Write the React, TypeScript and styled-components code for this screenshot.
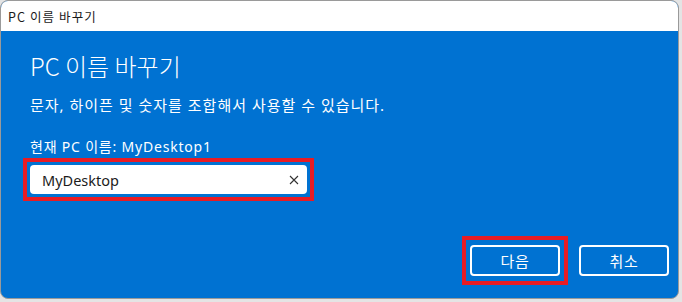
import React from "react";
import styled, { createGlobalStyle } from "styled-components";

const Global = createGlobalStyle`
  html, body { margin: 0; padding: 0; }
  body {
    background: #e4e4e4;
    font-family: "Noto Sans", "Noto Sans CJK KR", sans-serif;
    width: 682px;
    height: 302px;
    overflow: hidden;
  }
`;

const BLUE = "#0072d2";
const RED = "#e81c24";

const Window = styled.div`
  box-sizing: border-box;
  width: 679px;
  height: 299px;
  border: 1px solid #9a9a9a;
  border-radius: 8px;
  overflow: hidden;
  display: flex;
  flex-direction: column;
  background: ${BLUE};
`;

const TitleBar = styled.div`
  height: 30px;
  flex: none;
  background: #ffffff;
  display: flex;
  align-items: center;
  padding-left: 7px;
  font-size: 12.5px;
  letter-spacing: 1.1px;
  color: #1a1a1a;
  font-family: "Noto Sans CJK KR", sans-serif;
`;

const Body = styled.div`
  flex: 1;
  display: flex;
  flex-direction: column;
  padding: 19px 9px 13px 29px;
  color: #ffffff;
  font-family: "Noto Sans", "Noto Sans CJK KR", sans-serif;
`;

const Heading = styled.h1`
  margin: 0;
  font-size: 24px;
  line-height: 32px;
  font-weight: 300;
  font-family: "Noto Sans CJK KR", sans-serif;
`;

const Text = styled.p<{ $top: number; $size: number; $spacing: number }>`
  margin: ${(p) => p.$top}px 0 0 0;
  font-size: ${(p) => p.$size}px;
  letter-spacing: ${(p) => p.$spacing}px;
  line-height: 20px;
  font-weight: 400;
`;

const Highlight = styled.div<{ $pad: string }>`
  box-sizing: border-box;
  border: 4px solid ${RED};
  padding: ${(p) => p.$pad};
  display: inline-flex;
`;

const FieldWrap = styled.div`
  margin: 1px 0 0 -7px;
  align-self: flex-start;
`;

const Field = styled.div`
  box-sizing: border-box;
  width: 277px;
  height: 29px;
  background: #ffffff;
  border-radius: 4px;
  display: flex;
  align-items: center;
  padding: 0 8px 0 12px;
  color: #1b1b1b;
  font-size: 14.5px;
`;

const FieldText = styled.span`
  flex: 1;
`;

const Footer = styled.div`
  margin-top: auto;
  display: flex;
  justify-content: flex-end;
  align-items: center;
  gap: 11px;
`;

const Button = styled.button`
  box-sizing: border-box;
  width: 90px;
  height: 31px;
  border: 2px solid #ffffff;
  border-radius: 4px;
  background: ${BLUE};
  color: #ffffff;
  font-family: "Noto Sans CJK KR", sans-serif;
  font-size: 15px;
  letter-spacing: 0.8px;
  padding: 0;
  display: flex;
  align-items: center;
  justify-content: center;
`;

const ClearIcon = () => (
  <svg width="10" height="10" viewBox="0 0 10 10">
    <path d="M1 1 L9 9 M9 1 L1 9" stroke="#333" strokeWidth="1.1" fill="none" />
  </svg>
);

export default function App() {
  return (
    <>
      <Global />
      <Window>
        <TitleBar>PC 이름 바꾸기</TitleBar>
        <Body>
          <Heading>PC 이름 바꾸기</Heading>
          <Text $top={13} $size={15} $spacing={1}>
            문자, 하이픈 및 숫자를 조합해서 사용할 수 있습니다.
          </Text>
          <Text $top={22} $size={14} $spacing={0.8}>
            현재 PC 이름: MyDesktop1
          </Text>
          <FieldWrap>
            <Highlight $pad="3px">
              <Field>
                <FieldText>MyDesktop</FieldText>
                <ClearIcon />
              </Field>
            </Highlight>
          </FieldWrap>
          <Footer>
            <Highlight $pad="5px 4px">
              <Button>다음</Button>
            </Highlight>
            <Button>취소</Button>
          </Footer>
        </Body>
      </Window>
    </>
  );
}
